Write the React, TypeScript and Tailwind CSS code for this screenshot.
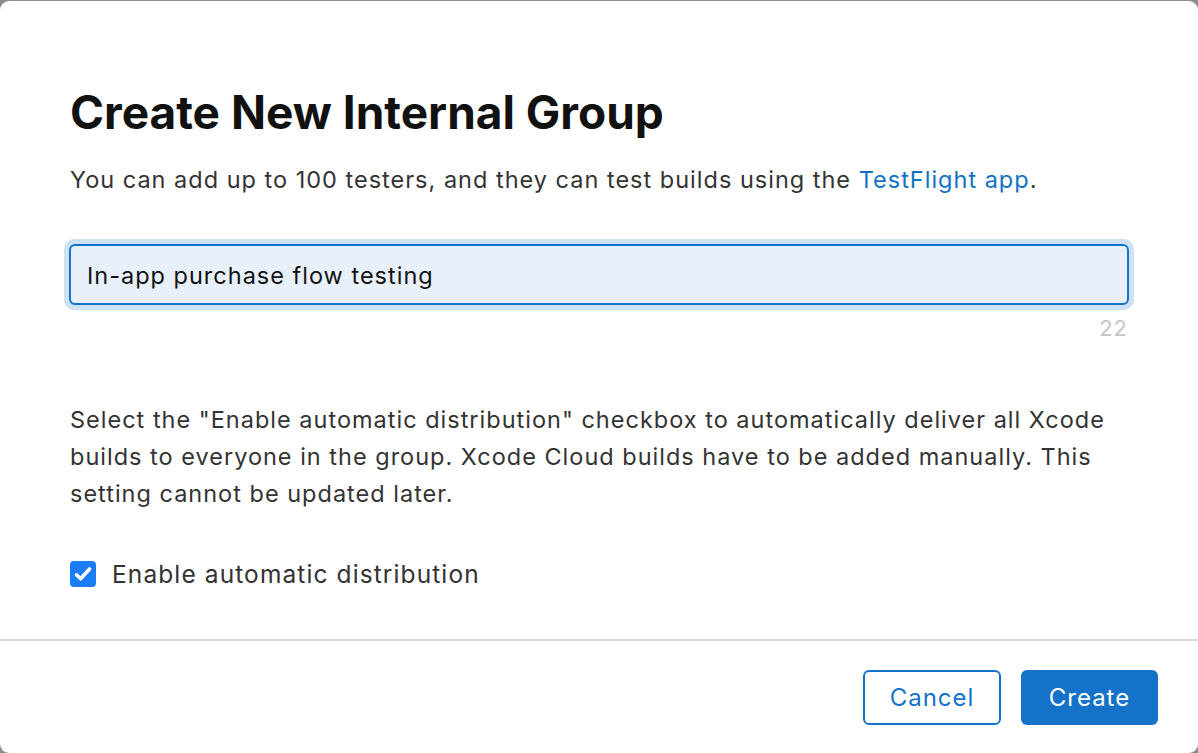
import React from "react";

export default function App() {
  return (
    <div className="w-[1198px] h-[753px] bg-[#8c8c8c] pt-px overflow-hidden" style={{ fontFamily: "Inter, 'Noto Sans', sans-serif" }}>
      <div className="w-[1198px] h-[752px] bg-white rounded-[9px] flex flex-col">
        <div className="flex-1 px-[70px] pt-[83px]">
          <h1 className="text-[46px] leading-[56px] font-bold text-[#111]">Create New Internal Group</h1>
          <p className="mt-[24px] text-[23.5px] leading-[32px] tracking-[1px] text-[#333]">
            You can add up to 100 testers, and they can test builds using the{" "}
            <span className="text-[#0f72c6]">TestFlight app</span>.
          </p>
          <div className="mt-[43px] -mx-[6px] rounded-[10px] bg-[#cfe2f4] p-[5px]">
            <div className="h-[61px] rounded-[6px] border-2 border-[#1473cc] bg-[#e8f0fc] flex items-center px-[16px] pt-[3px]">
              <span className="text-[23.5px] leading-[30px] tracking-[1px] text-[#111]">In-app purchase flow testing</span>
            </div>
          </div>
          <div className="flex justify-end mt-[4px]">
            <span className="text-[22px] leading-[28px] tracking-[1px] text-[#c6c6c6]">22</span>
          </div>
          <p className="mt-[59px] text-[23.5px] leading-[37px] tracking-[1px] text-[#333]">
            Select the "Enable automatic distribution" checkbox to automatically deliver all Xcode builds to everyone in the group. Xcode Cloud builds have to be added manually. This setting cannot be updated later.
          </p>
          <div className="mt-[47px] flex items-center gap-[16px]">
            <div className="w-[26px] h-[26px] rounded-[4px] bg-[#1a7cf7] flex items-center justify-center">
              <svg width="26" height="26" viewBox="0 0 26 26">
                <path d="M6.5 13.8 L10.6 17.8 L19.6 8" fill="none" stroke="white" strokeWidth="3.6" strokeLinecap="round" strokeLinejoin="round" />
              </svg>
            </div>
            <span className="text-[24.5px] leading-[30px] tracking-[1.1px] text-[#333]">Enable automatic distribution</span>
          </div>
        </div>
        <div className="h-[114px] border-t-2 border-[#d8d8d8] flex items-start justify-end gap-[20px] pr-[40px] pt-[29px]">
          <button className="w-[138px] h-[55px] rounded-[6px] border-2 border-[#1473cc] text-[#1473cc] text-[24px] tracking-[1px] bg-white">Cancel</button>
          <button className="w-[137px] h-[55px] rounded-[6px] bg-[#1473c8] text-white text-[24px] tracking-[1px]">Create</button>
        </div>
      </div>
    </div>
  );
}
